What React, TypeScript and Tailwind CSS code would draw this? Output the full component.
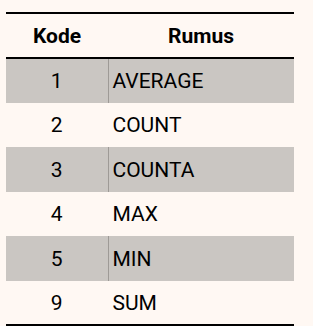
import React from 'react';

const rows = [
  { kode: '1', rumus: 'AVERAGE' },
  { kode: '2', rumus: 'COUNT' },
  { kode: '3', rumus: 'COUNTA' },
  { kode: '4', rumus: 'MAX' },
  { kode: '5', rumus: 'MIN' },
  { kode: '9', rumus: 'SUM' },
];

const App: React.FC = () => {
  return (
    <div className="w-[313px] h-[326px] bg-[#fff8f3] pt-3 pl-1.5 font-['Roboto',sans-serif] text-[21px] leading-none text-black">
      <table className="w-[288px] border-collapse border-y-2 border-black">
        <thead>
          <tr className="h-[45px] border-b-2 border-black">
            <th className="w-[102px] pt-[2px] font-bold text-center">Kode</th>
            <th className="pt-[2px] font-bold text-center">Rumus</th>
          </tr>
        </thead>
        <tbody>
          {rows.map((r, i) => (
            <tr key={r.kode} className={`h-[44.5px] ${i % 2 === 0 ? 'bg-[#cac6c2]' : ''}`}>
              <td className={`pt-[2px] text-center border-r ${i % 2 === 0 ? 'border-[#9e9a96]' : 'border-transparent'}`}>{r.kode}</td>
              <td className="pt-[2px] pl-1">{r.rumus}</td>
            </tr>
          ))}
        </tbody>
      </table>
    </div>
  );
};

export default App;
